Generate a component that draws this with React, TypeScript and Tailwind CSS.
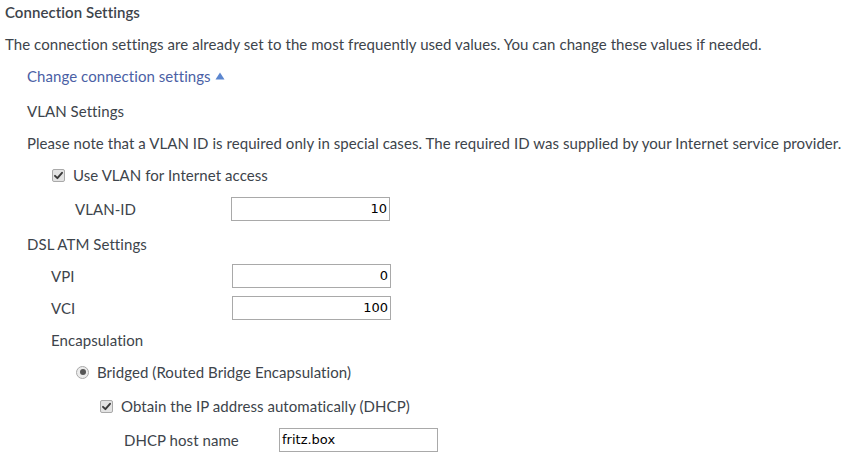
import React from "react";

const font = { fontFamily: "Lato, 'Open Sans', sans-serif", letterSpacing: "0.06px" };

function Check() {
  return (
    <span className="inline-flex h-[13px] w-[13px] items-center justify-center rounded-[2px] border border-[#a9a9a9] bg-[#e3e3e3]">
      <svg width="9" height="9" viewBox="0 0 9 9">
        <path d="M1 4.8 L3.4 7.2 L8 1.8" fill="none" stroke="#3a3a3a" strokeWidth="1.9" strokeLinecap="round" strokeLinejoin="round" />
      </svg>
    </span>
  );
}

function Radio() {
  return (
    <span className="inline-flex h-[13px] w-[13px] items-center justify-center rounded-full border border-[#a9a9a9] bg-[#ececec]">
      <span className="h-[6px] w-[6px] rounded-full bg-[#555]" />
    </span>
  );
}

function Input({ value, align = "right" }: { value: string; align?: "right" | "left" }) {
  return (
    <div
      className={`flex h-[24px] w-[159px] items-center border border-[#a9a9a9] bg-white px-[2px] text-black ${align === "right" ? "justify-end" : "justify-start"}`}
      style={{ fontFamily: "'DejaVu Sans', Verdana, sans-serif", fontSize: "13px", letterSpacing: "0px" }}
    >
      {value}
    </div>
  );
}

export default function App() {
  return (
    <div className="h-[455px] w-[842px] overflow-hidden bg-white text-[15px] text-[#3d444b]" style={font}>
      <div className="flex h-[24px] items-center pl-[5px] font-semibold">Connection Settings</div>
      <div className="mt-[8px] flex h-[24px] items-center pl-[5px]">
        The connection settings are already set to the most frequently used values. You can change these values if needed.
      </div>
      <div className="mt-[8px] flex h-[24px] items-center pl-[27px] text-[#4b5fa5]">
        Change connection settings
        <svg className="ml-[4px]" width="10" height="8" viewBox="0 0 10 8">
          <path d="M5 0.5 L9.5 7.5 L0.5 7.5 Z" fill="#5b86cf" />
        </svg>
      </div>
      <div className="mt-[11px] flex h-[24px] items-center pl-[27px]">VLAN Settings</div>
      <div className="mt-[8px] flex h-[24px] items-center pl-[27px]">
        Please note that a VLAN ID is required only in special cases. The required ID was supplied by your Internet service provider.
      </div>
      <div className="mt-[8px] flex h-[24px] items-center gap-[8px] pl-[52px]">
        <Check />
        <span>Use VLAN for Internet access</span>
      </div>
      <div className="mt-[10px] flex h-[24px] items-center pl-[75px]">
        <span className="w-[156px]">VLAN-ID</span>
        <Input value="10" />
      </div>
      <div className="mt-[11px] flex h-[24px] items-center pl-[27px]">DSL ATM Settings</div>
      <div className="mt-[8px] flex h-[24px] items-center pl-[51px]">
        <span className="w-[181px]">VPI</span>
        <Input value="0" />
      </div>
      <div className="mt-[8px] flex h-[24px] items-center pl-[51px]">
        <span className="w-[181px]">VCI</span>
        <Input value="100" />
      </div>
      <div className="mt-[8px] flex h-[24px] items-center pl-[51px]">Encapsulation</div>
      <div className="mt-[8px] flex h-[24px] items-center gap-[8px] pl-[76px]">
        <Radio />
        <span>Bridged (Routed Bridge Encapsulation)</span>
      </div>
      <div className="mt-[10px] flex h-[24px] items-center gap-[8px] pl-[100px]">
        <Check />
        <span>Obtain the IP address automatically (DHCP)</span>
      </div>
      <div className="mt-[10px] flex h-[24px] items-center pl-[124px]">
        <span className="w-[155px]">DHCP host name</span>
        <Input value="fritz.box" align="left" />
      </div>
    </div>
  );
}
